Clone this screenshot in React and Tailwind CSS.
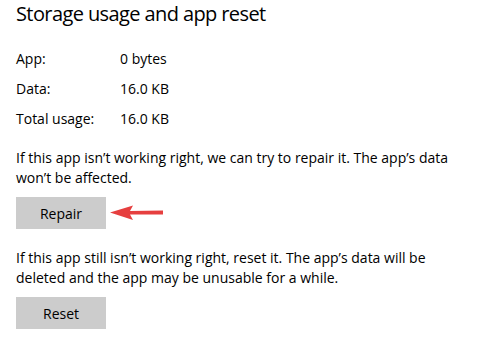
import React from 'react';

const rows = [
  ['App:', '0 bytes'],
  ['Data:', '16.0 KB'],
  ['Total usage:', '16.0 KB'],
];

const Arrow = () => (
  <svg width="56" height="18" viewBox="0 0 56 18" className="ml-[3px]">
    <path d="M1 8.5 L24 1.5 L21 7 L54 6.5 L54 10.5 L21 10.5 L24 16 Z" fill="#e63f3f" />
  </svg>
);

export default function App() {
  return (
    <div className="w-[478px] h-[348px] bg-white text-black pl-4 pt-[1px] font-['Open_Sans',sans-serif]">
      <h1 className="text-[20px] leading-[26px] font-normal tracking-[-0.6px]">Storage usage and app reset</h1>
      <div className="mt-[22px] flex flex-col gap-[10px] text-[14px] leading-[20px]">
        {rows.map(([k, v]) => (
          <div key={k} className="flex">
            <span className="w-[104px]">{k}</span>
            <span>{v}</span>
          </div>
        ))}
      </div>
      <p className="mt-[19px] w-[450px] text-[14px] leading-[20px]">
        If this app isn’t working right, we can try to repair it. The app’s data won’t be affected.
      </p>
      <div className="mt-[9px] flex items-center">
        <button className="w-[90px] h-[32px] bg-[#cccccc] text-[14px]">Repair</button>
        <Arrow />
      </div>
      <p className="mt-[19px] w-[450px] text-[14px] leading-[20px]">
        If this app still isn’t working right, reset it. The app’s data will be deleted and the app may be unusable for a while.
      </p>
      <button className="mt-[9px] w-[90px] h-[32px] bg-[#cccccc] text-[14px]">Reset</button>
    </div>
  );
}
